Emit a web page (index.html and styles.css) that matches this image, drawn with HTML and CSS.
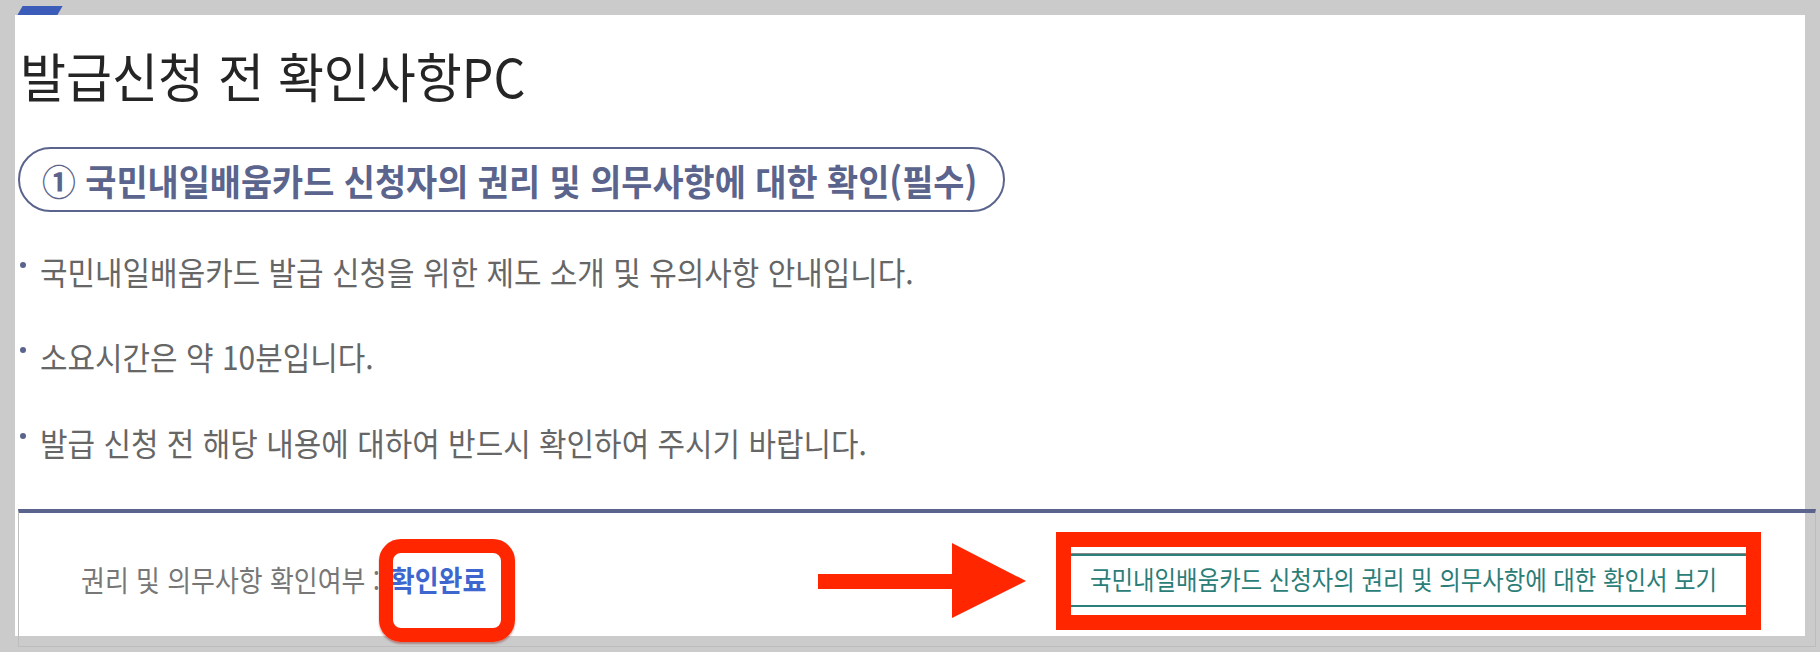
FILE: index.html
```html
<!DOCTYPE html>
<html lang="ko">
<head>
<meta charset="utf-8">
<title>발급신청 전 확인사항</title>
<link rel="stylesheet" href="styles.css">
</head>
<body>
  <div class="topbar"><span class="tab"></span></div>
  <main class="panel">
    <h2 class="title"><span class="cond">발급신청 전 확인사항PC</span></h2>
    <div class="pill"><span class="cond">① 국민내일배움카드 신청자의 권리 및 의무사항에 대한 확인(필수)</span></div>
    <ul class="notes">
      <li><span class="cond">국민내일배움카드 발급 신청을 위한 제도 소개 및 유의사항 안내입니다.</span></li>
      <li><span class="cond">소요시간은 약 10분입니다.</span></li>
      <li><span class="cond">발급 신청 전 해당 내용에 대하여 반드시 확인하여 주시기 바랍니다.</span></li>
    </ul>
    <div class="confirm">
      <p class="status"><span class="cond">권리 및 의무사항 확인여부 : <strong>확인완료</strong></span></p>
      <a class="view-btn" href="#"><span class="cond">국민내일배움카드 신청자의 권리 및 의무사항에 대한 확인서 보기</span></a>
      <span class="mark mark-status"></span>
      <svg class="arrow" viewBox="0 0 208 75" aria-hidden="true"><path d="M0 31H134V0L208 38L134 75V46H0Z" fill="#ff2600"/></svg>
      <span class="mark mark-link"></span>
    </div>
  </main>
</body>
</html>
```
FILE: styles.css
```css
html, body {
  margin: 0;
  padding: 0;
}
body {
  width: 1820px;
  height: 652px;
  overflow: hidden;
  background: #cbcbcb;
  font-family: "Noto Sans CJK KR", "Noto Sans", sans-serif;
}
.topbar {
  height: 9px;
  padding-top: 6px;
}
.tab {
  display: block;
  width: 40px;
  height: 9px;
  margin-left: 20px;
  background: #3b5cb8;
  transform: skewX(-30deg);
}
.panel {
  display: block;
  box-sizing: border-box;
  width: 1790px;
  height: 621px;
  margin-left: 15px;
  padding: 30.2px 0 0 3px;
  background: #fff;
}

/* the original face is a little narrower than Noto Sans CJK */
.cond {
  display: inline-block;
  white-space: nowrap;
  transform-origin: 0 50%;
  transform: scaleX(var(--sx, 0.94));
}

.title {
  --sx: 0.943;
  margin: 0;
  padding-left: 2px;
  font-size: 53px;
  font-weight: 400;
  line-height: 60px;
  color: #252525;
}
.pill {
  --sx: 0.94;
  box-sizing: border-box;
  display: flex;
  align-items: center;
  width: 987px;
  height: 65px;
  margin-top: 42px;
  padding-left: 22px;
  border: 2px solid #5a648c;
  border-radius: 33px;
  color: #5a648c;
  font-size: 36px;
  font-weight: 700;
  line-height: 1;
}
.notes {
  --sx: 0.935;
  list-style: none;
  margin: 38.7px 0 0;
  padding: 0;
  display: flex;
  flex-direction: column;
  gap: 45.5px;
}
.notes li {
  display: flex;
  align-items: flex-start;
  font-size: 32px;
  line-height: 40px;
  color: #666;
}
.notes li::before {
  content: "";
  flex: none;
  width: 6px;
  height: 6px;
  margin: 11px 14px 0 2px;
  border-radius: 50%;
  background: #5a648c;
}
.confirm {
  position: relative;
  box-sizing: border-box;
  display: flex;
  align-items: center;
  justify-content: space-between;
  width: 1798px;
  height: 138px;
  margin-top: 47.3px;
  padding: 0 60px 0 61.5px;
  border: 1px solid #bdbdbd;
  border-top: 4px solid #5a648c;
}
.status {
  --sx: 0.895;
  margin: 0;
  font-size: 29px;
  line-height: 1;
  color: #777;
}
.status strong {
  margin-left: 4px;
  font-weight: 700;
  color: #3e66cf;
}
.view-btn {
  --sx: 0.9;
  box-sizing: border-box;
  display: flex;
  align-items: center;
  width: 693px;
  height: 54px;
  padding-left: 28px;
  border-top: 1px solid #888;
  border-bottom: 2px solid #2e7f7a;
  box-shadow: inset 0 2px 0 #2e7f7a;
  font-size: 26px;
  line-height: 1;
  color: #2b7d78;
  text-decoration: none;
}
.mark {
  position: absolute;
  box-sizing: border-box;
  border: 15px solid #ff2600;
}
.mark-status {
  left: 360px;
  top: 26px;
  width: 136px;
  height: 103px;
  border-width: 14px;
  border-radius: 22px;
  box-shadow: 0 2px 2px rgba(120, 0, 0, 0.35);
}
.mark-link {
  left: 1037px;
  top: 19px;
  width: 705px;
  height: 98px;
}
.arrow {
  position: absolute;
  left: 799px;
  top: 30px;
  width: 208px;
  height: 75px;
}
```
